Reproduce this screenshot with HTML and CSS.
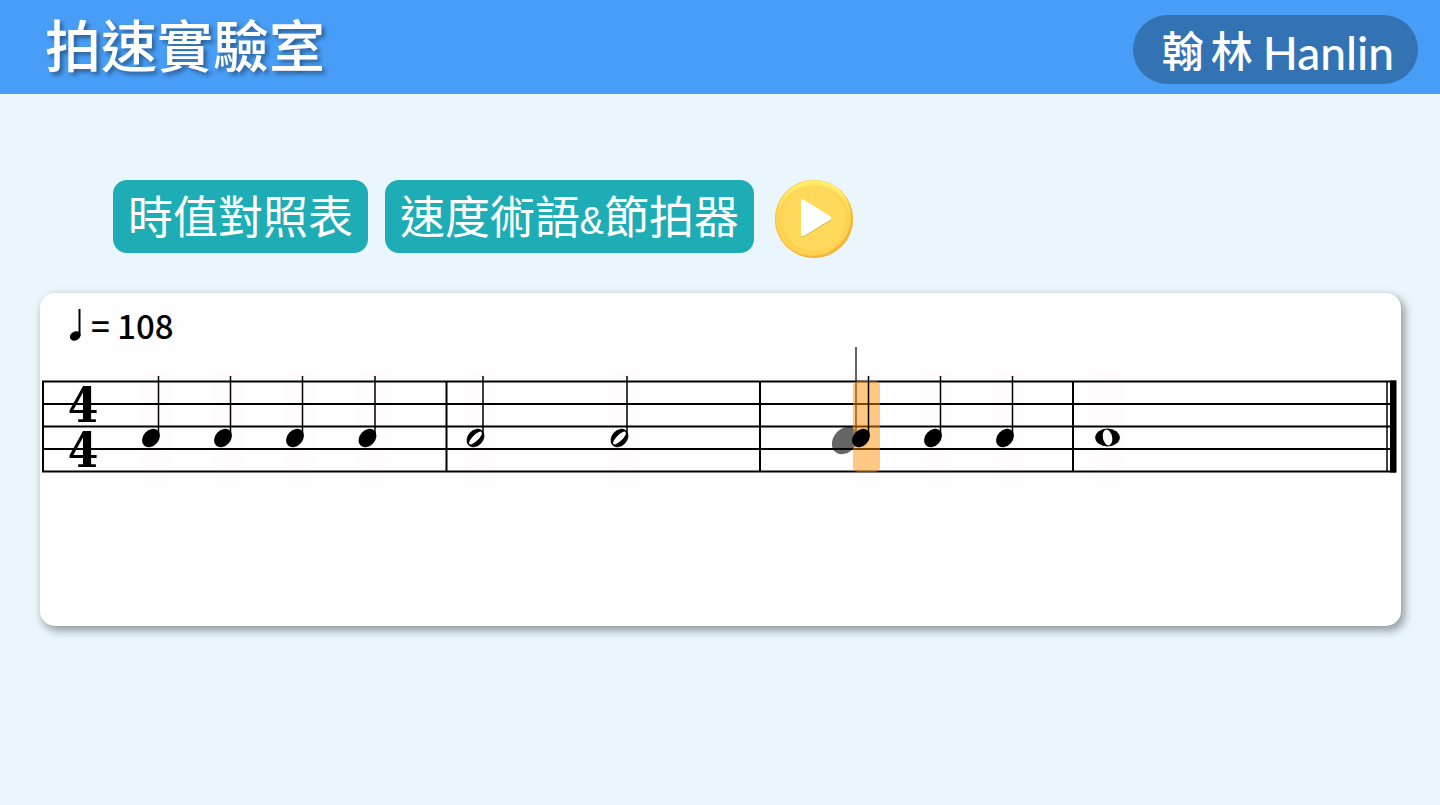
FILE: index.html
```html
<!DOCTYPE html>
<html lang="zh-Hant">
<head>
  <meta charset="UTF-8" />
  <meta name="viewport" content="width=device-width, initial-scale=1" />
  <title>拍速實驗室</title>
  <link rel="stylesheet" href="styles.css">
</head>
<body>
  <header class="header">
    <h1 class="title">拍速實驗室</h1>
    <a class="logo" href="#"><span class="logo-zh">翰</span><span class="logo-zh">林</span><span class="logo-en">Hanlin</span></a>
  </header>

  <main>
    <div class="toolbar">
      <button type="button" class="btn">時值對照表</button>
      <button type="button" class="btn">速度術語<span class="amp">&amp;</span>節拍器</button>
      <button type="button" class="btn-play" aria-label="播放">
        <svg viewBox="0 0 78 78">
          <path class="play-shadow" d="M26 22 Q26 19 29 21 L55 36 Q58 39 55 41 L29 57 Q26 58 26 56 Z" />
          <path class="play-icon" d="M26 21 Q26 18 29 20 L55 36 Q58 38 55 40 L29 56 Q26 57 26 55 Z" />
        </svg>
      </button>
    </div>

    <section class="sheet">
      <div class="tempo">
        <svg class="tempo-note" viewBox="0 0 12 32" aria-hidden="true">
          <path d="M9.5 0V27" stroke="#000" stroke-width="2" />
          <ellipse cx="5.2" cy="27" rx="5.6" ry="4.4" transform="rotate(-30 5.2 27)" />
        </svg>
        <span>= 108</span>
      </div>

      <svg class="staff" viewBox="0 0 1355 166" role="img" aria-label="4/4">
        <defs>
          <g id="quarter">
            <rect class="hit" x="-9" y="25" width="28" height="114" />
            <ellipse cx="0" cy="93" rx="10.2" ry="7.8" transform="rotate(-48 0 93)" />
            <path class="stem" d="M7.5 31V91" />
          </g>
          <g id="half">
            <rect class="hit" x="-9" y="25" width="28" height="114" />
            <ellipse cx="0" cy="93" rx="10.2" ry="7.8" transform="rotate(-48 0 93)" />
            <ellipse cx="0" cy="93" rx="8.6" ry="3" transform="rotate(-45 0 93)" fill="#fff" />
            <path class="stem" d="M7.5 31V91" />
          </g>
        </defs>

        <!-- staff lines -->
        <path class="line" d="M0 36.5H1354M0 59H1354M0 81.5H1354M0 104H1354M0 126.5H1354" />
        <!-- bar lines -->
        <path class="line" d="M1 36V126M404.5 36V126M718 36V126M1031 36V126" />
        <path class="line thin" d="M1345 36V126" />
        <rect x="1348" y="35.5" width="6.5" height="92" />

        <text class="meter" x="41" y="77">4</text>
        <text class="meter" x="41" y="122">4</text>

        <!-- bar 1 -->
        <use href="#quarter" x="109" />
        <use href="#quarter" x="181" />
        <use href="#quarter" x="253" />
        <use href="#quarter" x="325.5" />
        <!-- bar 2 -->
        <use href="#half" x="433.5" />
        <use href="#half" x="577.5" />
        <!-- bar 3 -->
        <g class="dragged">
          <ellipse cx="803" cy="95.5" rx="15" ry="11.5" transform="rotate(-50 803 95.5)" />
          <path d="M814 2V90" />
        </g>
        <rect class="cursor" x="811" y="36" width="27" height="91" rx="5" />
        <use href="#quarter" x="819" />
        <use href="#quarter" x="891" />
        <use href="#quarter" x="963" />
        <!-- bar 4 -->
        <rect class="hit" x="1050" y="25" width="30" height="114" />
        <ellipse cx="1065.5" cy="92.5" rx="12.3" ry="9" />
        <ellipse cx="1065.5" cy="92.5" rx="4.6" ry="8" transform="rotate(-12 1065.5 92.5)" fill="#fff" />
      </svg>
    </section>
  </main>
</body>
</html>
```
FILE: styles.css
```css
* {
  box-sizing: border-box;
}
body {
  margin: 0;
  background: #eaf6fc;
  color: #000;
  font-family: "Noto Sans CJK TC", sans-serif;
}
.header {
  display: flex;
  justify-content: space-between;
  align-items: center;
  height: 94px;
  padding: 4px 22px 0 45px;
  background: #489df6;
}
.title {
  margin: 0;
  padding-bottom: 12px;
  color: #fff;
  font-size: 56px;
  font-weight: 500;
  line-height: 64px;
  text-shadow: 3px 3px 4px rgba(0, 0, 0, 0.4);
}
.logo {
  display: flex;
  align-items: center;
  gap: 7px;
  height: 69px;
  padding: 0 24px 0 29px;
  border-radius: 35px;
  background: #3373b3;
  color: #fff;
  font-size: 42px;
  font-weight: 500;
  line-height: 64px;
  text-decoration: none;
}
.logo-en {
  padding: 8px 0 0 3px;
  font-family: Lato, sans-serif;
  font-size: 46px;
}
.toolbar {
  display: flex;
  align-items: flex-start;
  gap: 17px;
  padding: 86px 40px 0 113px;
}
.btn {
  padding: 0 15px 4px;
  border: none;
  border-radius: 14px;
  background: #1eadb5;
  color: #fff;
  font-family: inherit;
  font-size: 45px;
  line-height: 69px;
  cursor: pointer;
}
.amp {
  font-family: "Liberation Mono", monospace;
  font-size: 40px;
  line-height: 1;
}
.btn-play {
  width: 78px;
  height: 78px;
  margin-left: 4px;
  padding: 0;
  border: none;
  border-radius: 50%;
  background: #ffd95b;
  box-shadow: inset -2px -2px 1px #edb53a, inset 1px 0 1px #f0bd45, inset 0 5px 3px #fff070, inset 0 0 0 7px #ffd252;
  cursor: pointer;
}
.btn-play svg {
  display: block;
}
.play-icon {
  fill: #fff;
}
.play-shadow {
  fill: #dfb23e;
}
.sheet {
  min-height: 333px;
  margin: 35px 39px 40px 40px;
  padding: 12px 4px 0 2px;
  border-radius: 15px;
  background: #fefefe;
  box-shadow: 3px 4px 8px 1px rgba(0, 0, 0, 0.36);
}
.tempo {
  display: flex;
  align-items: center;
  gap: 9px;
  height: 40px;
  padding-left: 28px;
  font-size: 33px;
  font-weight: 500;
  line-height: 40px;
}
.tempo-note {
  width: 12px;
  height: 32px;
}
.staff {
  display: block;
  width: 100%;
  height: auto;
}
.line {
  fill: none;
  stroke: #000;
  stroke-width: 2;
}
.thin {
  stroke-width: 1.5;
}
.stem {
  stroke: #000;
  stroke-width: 1.5;
}
.hit {
  fill: #ff0040;
  opacity: 0.008;
}
.meter {
  font-family: "DejaVu Serif Condensed", "DejaVu Serif", serif;
  font-size: 49px;
  font-weight: 700;
  text-anchor: middle;
}
.dragged {
  opacity: 0.6;
}
.dragged path {
  stroke: #000;
  stroke-width: 2;
}
.cursor {
  fill: #ff9100;
  opacity: 0.48;
}
```
